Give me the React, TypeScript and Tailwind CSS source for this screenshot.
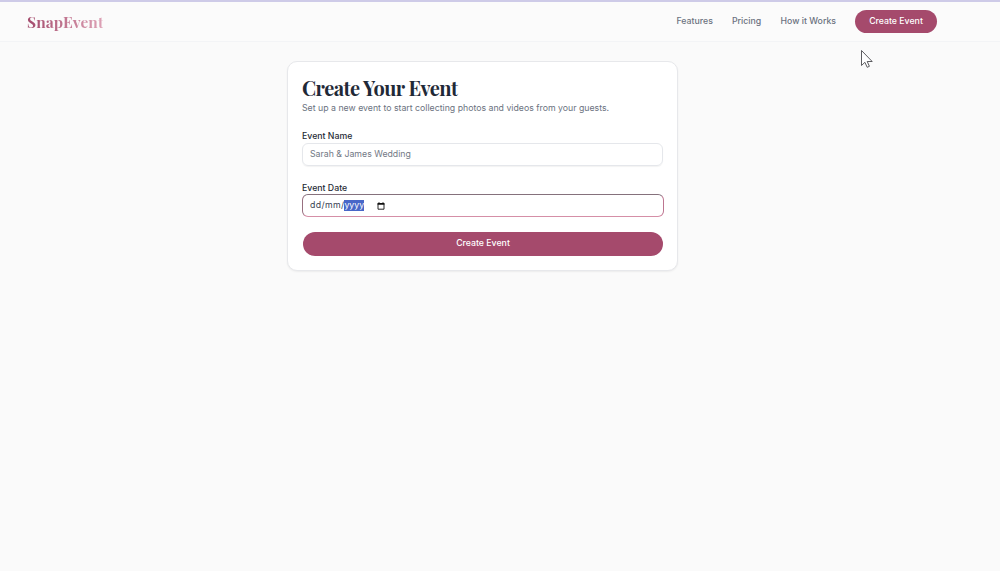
import React from 'react';

const navLinks = [
  { label: 'Features', width: 'w-[36px]' },
  { label: 'Pricing', width: 'w-[29px]' },
  { label: 'How it Works', width: 'w-[55px]' },
];

const Navbar: React.FC = () => (
  <header className="flex h-[42px] items-center justify-between border-t-2 border-b border-t-[#cecbe8] border-b-[#f3f4f6] bg-[#fbfbfb] pr-[63px] pl-[27px]">
    <a
      href="#"
      className="bg-gradient-to-r from-[#a34a6c] to-[#dda2b6] bg-clip-text font-['Playfair_Display','Liberation_Serif',serif] text-[15.5px] leading-5 font-bold tracking-[0.08px] whitespace-nowrap text-transparent"
    >
      SnapEvent
    </a>
    <nav className="flex items-center">
      {navLinks.map((link) => (
        <a
          key={link.label}
          href="#"
          className={`mr-[19.5px] text-[8.75px] font-medium whitespace-nowrap text-[#6b7280] ${link.width}`}
        >
          {link.label}
        </a>
      ))}
      <button className="h-[23px] w-[82px] rounded-full bg-[#a54a6c] text-[8.75px] font-medium text-white">
        Create Event
      </button>
    </nav>
  </header>
);

const CalendarIcon: React.FC = () => (
  <svg className="ml-[13px] size-[8px]" viewBox="0 0 8 8" fill="none">
    <path d="M1 1.5h6v5.7H1z" stroke="#111" strokeWidth="0.9" />
    <path d="M.6 1h6.8v1.8H.6zM1.5.3h1v1h-1zM5.5.3h1v1h-1z" fill="#111" />
  </svg>
);

const Cursor: React.FC = () => (
  <svg className="absolute top-[49px] left-[860px] h-[20px] w-[14px]" viewBox="0 0 14 20" fill="none">
    <path
      d="M1.5 1.5v15l3.4-3.2 2.3 5 2.2-1-2.2-4.8h5z"
      fill="#fff"
      stroke="#4b4b4f"
      strokeWidth="0.9"
    />
  </svg>
);

const App: React.FC = () => {
  return (
    <div className="relative min-h-screen overflow-hidden bg-[#fafafa] font-['Inter',sans-serif]">
      <Navbar />

      <main className="mt-[19px] ml-[287px] h-[210px] w-[391px] rounded-[10px] border border-[#e7e8eb] bg-white px-[14px] shadow-[0_1px_2px_rgba(0,0,0,0.06)]">
        <h1 className="mt-[14px] h-[24px] font-['Playfair_Display','Liberation_Serif',serif] text-[20px] leading-6 font-bold tracking-[-0.5px] whitespace-nowrap text-[#1f2937]">
          Create Your Event
        </h1>
        <p className="mt-[2px] h-[12px] text-[8.75px] leading-3 whitespace-nowrap text-[#6b7280]">
          Set up a new event to start collecting photos and videos from your guests.
        </p>

        <form>
          {/* Event name */}
          <label className="mt-[16px] block h-[12px] text-[8.75px] leading-3 font-medium text-[#262a35]">
            Event Name
          </label>
          <div className="mt-[1px] flex h-[23px] w-[361px] items-center rounded-[6px] border border-[#e5e7eb] px-[7px] text-[8.75px] text-[#737985] shadow-[0_1px_1px_rgba(0,0,0,0.05)]">
            Sarah &amp; James Wedding
          </div>

          {/* Event date, year segment is selected */}
          <label className="mt-[16px] block h-[12px] text-[8.75px] leading-3 font-medium text-[#262a35]">
            Event Date
          </label>
          <div className="flex h-[23px] w-[362px] items-center rounded-[6px] border border-t-[#85717c] border-r-[#bd7590] border-b-[#d58fa7] border-l-[#987080] pl-[7px] text-[8.75px] text-[#374151]">
            <span className="tracking-[0.35px]">dd/mm/</span>
            <span className="h-[11px] bg-[#4867c8] leading-[11px] text-white">yyyy</span>
            <CalendarIcon />
          </div>

          <button
            type="button"
            className="mt-[15px] ml-[1px] block h-[24px] w-[360px] rounded-full bg-[#a54a6c] text-[8.75px] font-medium text-white"
          >
            Create Event
          </button>
        </form>
      </main>

      <Cursor />
    </div>
  );
};

export default App;
